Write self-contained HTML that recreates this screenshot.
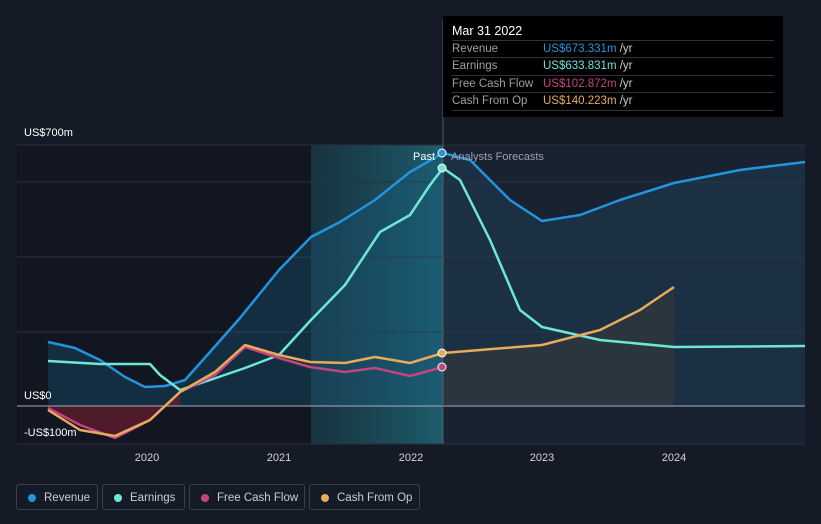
<!DOCTYPE html>
<html><head><meta charset="utf-8"><style>
body{margin:0;width:821px;height:524px;background:#151b26;font-family:"Liberation Sans",sans-serif;overflow:hidden;position:relative}
.tt{position:absolute;left:443px;top:16px;width:340px;height:101px;background:#000;color:#fff;font-size:11.5px}
.tt .h{position:absolute;left:9px;top:8px;font-size:12.5px}
.row{position:absolute;left:9px;width:322px;height:17px;border-top:1px solid #333;line-height:17px;color:#9aa0a8}
.row span{position:absolute;left:91px}
.lg{position:absolute;top:484px;height:26px;border:1px solid #3a404a;border-radius:3px;color:#ccd;font-size:11.5px;line-height:26px;box-sizing:border-box}
.lg i{position:absolute;left:11px;top:9px;width:8px;height:8px;border-radius:50%}
.lg b{font-weight:normal;position:absolute;left:27px}
</style></head><body>
<svg width="821" height="524" style="position:absolute;left:0;top:0">
<defs>
<linearGradient id="sh" x1="0" x2="1"><stop offset="0" stop-color="#1a4c5a" stop-opacity=".5"/><stop offset="1" stop-color="#1e6574" stop-opacity=".9"/></linearGradient>
</defs>
<rect x="17" y="145" width="294" height="299" fill="#111620"/>
<rect x="311" y="145" width="132" height="299" fill="url(#sh)"/>
<rect x="443" y="145" width="362" height="299" fill="#192230"/>
<g stroke="#2a313c" stroke-width="1">
<line x1="17" y1="145" x2="805" y2="145"/><line x1="17" y1="182" x2="805" y2="182"/>
<line x1="17" y1="257" x2="805" y2="257"/><line x1="17" y1="332" x2="805" y2="332"/>
<line x1="17" y1="444" x2="805" y2="444"/>
</g>
<path d="M48,342 L75,348 100,360 125,377 145,387 165,386 185,380 210,352 240,318 279,270 311,237 340,222 375,200 410,172 443,153 L443,406 48,406Z" fill="#1b5d80" opacity=".35"/>
<path d="M443,153 470,160 510,200 542,221 580,215 620,200 674,183 740,170 805,162 L805,406 443,406Z" fill="#1f3d55" opacity=".5"/>
<path d="M48,408 80,425 115,438 150,420 180,392 L180,406 48,406Z" fill="#6a1e30" opacity=".7"/>
<path d="M443,353 480,350 542,345 600,330 640,310 674,287 L674,406 443,406Z" fill="#3a3a38" opacity=".5"/>
<line x1="17" y1="406" x2="805" y2="406" stroke="#aab" stroke-width="1"/>
<line x1="443" y1="20" x2="443" y2="444" stroke="#555b66" stroke-width="1"/>
<g fill="none" stroke-width="2.5" stroke-linejoin="round">
<polyline stroke="#2394df" points="48,342 75,348 100,360 125,377 145,387 165,386 185,380 210,352 240,318 279,270 311,237 340,222 375,200 410,172 443,153 470,160 510,200 542,221 580,215 620,200 674,183 740,170 805,162"/>
<polyline stroke="#6ee7d6" points="48,361 100,364 150,364 160,375 180,390 210,380 245,368 279,355 311,320 345,285 380,232 410,215 430,185 443,168 460,180 490,240 520,310 542,327 600,340 674,347 805,346"/>
<polyline stroke="#c2457f" points="48,408 80,425 115,438 150,420 180,392 215,375 245,347 279,358 310,367 345,372 375,368 410,376 443,367"/>
<polyline stroke="#e8aa5c" points="48,410 80,430 115,436 150,420 180,392 215,372 245,345 279,355 310,362 345,363 375,357 410,363 443,353 480,350 542,345 600,330 640,310 674,287"/>
</g>
<circle cx="442" cy="153" r="4" fill="#2394df" stroke="#fff" stroke-width="1"/>
<circle cx="442" cy="168" r="4" fill="#6ee7d6" stroke="#fff" stroke-width="1"/>
<circle cx="442" cy="367" r="4" fill="#c2457f" stroke="#fff" stroke-width="1"/>
<circle cx="442" cy="353" r="4" fill="#e8aa5c" stroke="#fff" stroke-width="1"/>
<g font-family="Liberation Sans" font-size="11" fill="#fff">
<text x="24" y="136">US$700m</text><text x="24" y="399">US$0</text><text x="24" y="436">-US$100m</text>
<text x="435" y="160" text-anchor="end">Past</text>
<text x="451" y="160" fill="#9aa0a8">Analysts Forecasts</text>
</g>
<g font-family="Liberation Sans" font-size="11" fill="#cfd3da" text-anchor="middle">
<text x="147" y="461">2020</text><text x="279" y="461">2021</text><text x="411" y="461">2022</text><text x="542" y="461">2023</text><text x="674" y="461">2024</text>
</g>
</svg>
<div class="tt"><div class="h">Mar 31 2022</div>
<div class="row" style="top:24px">Revenue<span style="color:#2394df">US$673.331m <em style="color:#ccc;font-style:normal">/yr</em></span></div>
<div class="row" style="top:41px">Earnings<span style="color:#6ee7d6">US$633.831m <em style="color:#ccc;font-style:normal">/yr</em></span></div>
<div class="row" style="top:59px">Free Cash Flow<span style="color:#c2457f">US$102.872m <em style="color:#ccc;font-style:normal">/yr</em></span></div>
<div class="row" style="top:76px;border-bottom:1px solid #333">Cash From Op<span style="color:#e8aa5c">US$140.223m <em style="color:#ccc;font-style:normal">/yr</em></span></div>
</div>
<div class="lg" style="left:16px;width:82px"><i style="background:#2394df"></i><b>Revenue</b></div>
<div class="lg" style="left:102px;width:83px"><i style="background:#6ee7d6"></i><b>Earnings</b></div>
<div class="lg" style="left:189px;width:116px"><i style="background:#c2457f"></i><b>Free Cash Flow</b></div>
<div class="lg" style="left:309px;width:111px"><i style="background:#e8aa5c"></i><b>Cash From Op</b></div>
</body></html>
